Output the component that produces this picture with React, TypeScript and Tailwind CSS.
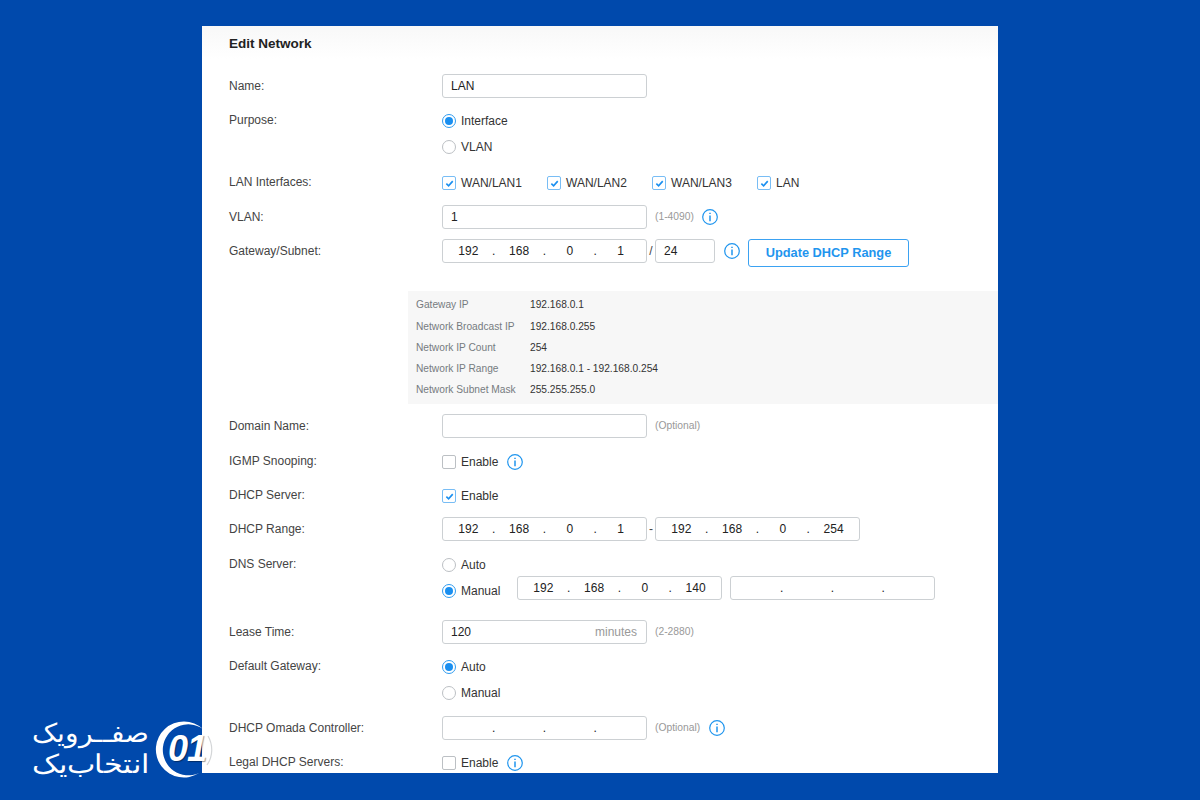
const font = "font-['Liberation_Sans',Arial,sans-serif]";

function Radio({ on, label }: { on?: boolean; label: string }) {
  return (
    <div className="flex items-center">
      <span
        className={
          on
            ? "flex h-[14px] w-[14px] items-center justify-center rounded-full border border-[#2f9cf0] bg-white"
            : "h-[14px] w-[14px] rounded-full border border-[#bcc0c4] bg-white"
        }
      >
        {on && <span className="h-2 w-2 rounded-full bg-[#1a8ff0]" />}
      </span>
      <span className="ml-[5px] text-[#333]">{label}</span>
    </div>
  );
}

function Checkbox({ on, label }: { on?: boolean; label: string }) {
  return (
    <div className="flex items-center">
      {on ? (
        <span className="flex h-[14px] w-[14px] items-center justify-center rounded-[2px] border-[1.5px] border-[#78bdf5] bg-white">
          <svg viewBox="0 0 10 10" className="h-[9px] w-[9px]">
            <path d="M1.5 5.2 L4 7.6 L8.6 2.4" fill="none" stroke="#1a8ff0" strokeWidth="1.8" />
          </svg>
        </span>
      ) : (
        <span className="h-[14px] w-[14px] rounded-[2px] border border-[#bcc0c4] bg-white" />
      )}
      <span className="ml-[5px] text-[#333]">{label}</span>
    </div>
  );
}

function Tip() {
  return (
    <span className="flex h-[14px] w-[17px] shrink-0 items-center justify-center">
      <svg viewBox="0 0 16 16" className="h-4 w-4 shrink-0" fill="none" stroke="#1f95ee" strokeWidth="1.2">
        <circle cx="8" cy="8" r="7.3" />
        <path d="M8 6.6 V12.2" strokeWidth="1.5" />
        <path d="M8 3.7 V5" strokeWidth="1.5" />
      </svg>
    </span>
  );
}

function Field({ value, width = "w-[205px]", right }: { value?: string; width?: string; right?: string }) {
  return (
    <div className={`flex h-6 ${width} shrink-0 items-center justify-between rounded-[3px] border border-[#ccd0d3] bg-white px-2 text-[#222]`}>
      <span>{value}</span>
      {right && <span className="mr-px text-[#999]">{right}</span>}
    </div>
  );
}

function IpField({ parts }: { parts: string[] }) {
  return (
    <div className="flex h-6 w-[205px] shrink-0 items-center rounded-[3px] border border-[#ccd0d3] bg-white text-[#222]">
      {parts.map((p, i) => (
        <div key={i} className="contents">
          <span className="flex-1 text-center">{p}</span>
          {i < 3 && <span className="flex w-0 justify-center">.</span>}
        </div>
      ))}
    </div>
  );
}

function Row({ label, top, children }: { label: string; top: string; children: React.ReactNode }) {
  return (
    <div className={`flex px-[27px] ${top}`}>
      <div className="w-[213px] shrink-0 text-[#444]">{label}</div>
      <div className="min-w-0 flex-1">{children}</div>
    </div>
  );
}

const hint = "text-[10.3px] text-[#999]";

const details = [
  ["Gateway IP", "192.168.0.1"],
  ["Network Broadcast IP", "192.168.0.255"],
  ["Network IP Count", "254"],
  ["Network IP Range", "192.168.0.1 - 192.168.0.254"],
  ["Network Subnet Mask", "255.255.255.0"],
];

export default function App() {
  return (
    <div className={`relative h-[800px] w-[1200px] overflow-hidden bg-[#0049ac] ${font} text-[12px] leading-[14px]`}>
      <div className="mx-auto mt-[26px] h-[747px] w-[796px] overflow-hidden bg-white">
        <div className="bg-gradient-to-b from-[#f8f8f8] to-white px-[27px] pt-[10px] pb-[8px] text-[13.5px] leading-[15px] font-bold text-[#222]">
          Edit Network
        </div>

        {/* top of controls */}
        <div className="mt-[15px] flex px-[27px]">
          <div className="w-[213px] shrink-0 pt-[5px] text-[#444]">Name:</div>
          <Field value="LAN" />
        </div>

        <Row label="Purpose:" top="mt-[15px]">
          <div className="flex flex-col gap-3 pt-px">
            <Radio on label="Interface" />
            <Radio label="VLAN" />
          </div>
        </Row>

        <Row label="LAN Interfaces:" top="mt-[21px]">
          <div className="flex pt-px">
            <div className="w-[105px]"><Checkbox on label="WAN/LAN1" /></div>
            <div className="w-[105px]"><Checkbox on label="WAN/LAN2" /></div>
            <div className="w-[105px]"><Checkbox on label="WAN/LAN3" /></div>
            <Checkbox on label="LAN" />
          </div>
        </Row>

        <div className="mt-[15px] flex px-[27px]">
          <div className="w-[213px] shrink-0 pt-[5px] text-[#444]">VLAN:</div>
          <Field value="1" />
          <span className={`ml-2 self-center ${hint}`}>(1-4090)</span>
          <span className="ml-2 self-center"><Tip /></span>
        </div>

        <div className="mt-[10px] flex px-[27px]">
          <div className="w-[213px] shrink-0 pt-[5px] text-[#444]">Gateway/Subnet:</div>
          <IpField parts={["192", "168", "0", "1"]} />
          <span className="flex h-6 w-2 items-center justify-center text-[#444]">/</span>
          <Field value="24" width="w-[60px]" />
          <span className="ml-2 flex h-6 items-center"><Tip /></span>
          <div className="ml-2 flex h-7 w-[161px] items-center justify-center rounded-[3px] border border-[#3ba2f2] bg-white text-[12.8px] font-bold text-[#1f95ee]">
            Update DHCP Range
          </div>
        </div>

        <div className="mt-6 ml-[206px] flex h-[113px] flex-col justify-center bg-[#f7f7f7] pl-2 text-[10.2px] leading-[21.3px]">
          {details.map(([k, v]) => (
            <div key={k} className="flex">
              <span className="w-[114px] text-[#767b80]">{k}</span>
              <span className="text-[#333]">{v}</span>
            </div>
          ))}
        </div>

        <div className="mt-[10px] flex px-[27px]">
          <div className="w-[213px] shrink-0 pt-[5px] text-[#444]">Domain Name:</div>
          <Field />
          <span className={`ml-2 self-center ${hint}`}>(Optional)</span>
        </div>

        <Row label="IGMP Snooping:" top="mt-4">
          <div className="flex items-center pt-px">
            <Checkbox label="Enable" />
            <span className="ml-2"><Tip /></span>
          </div>
        </Row>

        <Row label="DHCP Server:" top="mt-[19px]">
          <div className="pt-px"><Checkbox on label="Enable" /></div>
        </Row>

        <div className="mt-[14px] flex px-[27px]">
          <div className="w-[213px] shrink-0 pt-[5px] text-[#444]">DHCP Range:</div>
          <IpField parts={["192", "168", "0", "1"]} />
          <span className="flex h-6 w-2 items-center justify-center text-[#444]">-</span>
          <IpField parts={["192", "168", "0", "254"]} />
        </div>

        <Row label="DNS Server:" top="mt-4">
          <div className="pt-px"><Radio label="Auto" /></div>
          <div className="mt-1 flex items-start">
            <div className="w-[75px] pt-2"><Radio on label="Manual" /></div>
            <IpField parts={["192", "168", "0", "140"]} />
            <div className="ml-2"><IpField parts={["", "", "", ""]} /></div>
          </div>
        </Row>

        <div className="mt-5 flex px-[27px]">
          <div className="w-[213px] shrink-0 pt-[5px] text-[#444]">Lease Time:</div>
          <Field value="120" right="minutes" />
          <span className={`ml-2 self-center ${hint}`}>(2-2880)</span>
        </div>

        <Row label="Default Gateway:" top="mt-[15px]">
          <div className="flex flex-col gap-3 pt-px">
            <Radio on label="Auto" />
            <Radio label="Manual" />
          </div>
        </Row>

        <div className="mt-4 flex px-[27px]">
          <div className="w-[213px] shrink-0 pt-[5px] text-[#444]">DHCP Omada Controller:</div>
          <IpField parts={["", "", "", ""]} />
          <span className={`ml-2 self-center ${hint}`}>(Optional)</span>
          <span className="ml-2 self-center"><Tip /></span>
        </div>

        <Row label="Legal DHCP Servers:" top="mt-[15px]">
          <div className="flex items-center pt-px">
            <Checkbox label="Enable" />
            <span className="ml-2"><Tip /></span>
          </div>
        </Row>
      </div>

      {/* logo overlaps the panel corner */}
      <div className="absolute top-[718px] left-[33px] flex items-center">
        <div dir="rtl" className="w-[116px] whitespace-nowrap font-['DejaVu_Sans',sans-serif] text-[26px] leading-[30.5px] font-extralight text-white">
          <div className="origin-right scale-x-[1.08]">صفــرویک</div>
          <div className="origin-right scale-x-[1.16]">انتخاب‌یک</div>
        </div>
        <div className="relative ml-[6px] h-[60px] w-[60px]">
          <svg viewBox="0 0 60 60" className="h-full w-full">
            <path d="M53 17 A27 27 0 0 1 52 46" fill="none" stroke="#d4d6d8" strokeWidth="1.2" />
            <path d="M48 10 A28 28 0 1 0 44 54 A25.5 25.5 0 1 1 48 10 Z" fill="#fff" />
          </svg>
          <span className="absolute inset-0 flex items-center justify-center pl-[4px] text-[36px] font-bold italic tracking-[-1px] text-white [text-shadow:1px_1px_1px_rgba(0,0,0,0.4)]">
            01
          </span>
        </div>
      </div>
    </div>
  );
}
